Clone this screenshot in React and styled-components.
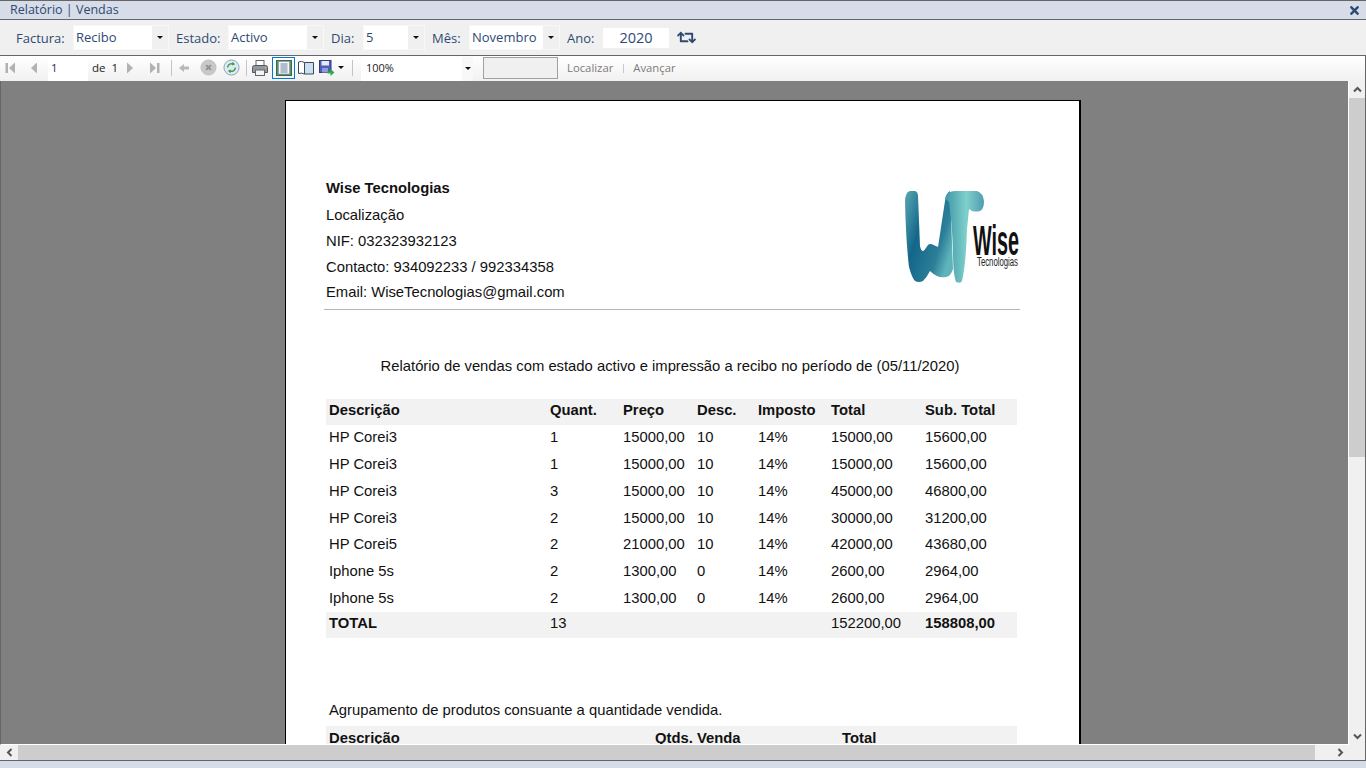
import React from 'react'
import styled, { createGlobalStyle } from 'styled-components'
import { FaRetweet, FaTimes } from 'react-icons/fa'

const Global = createGlobalStyle`
  html, body {
    margin: 0;
    padding: 0;
    overflow: hidden;
    background: #f0f0f0;
  }
`

const Window = styled.div`
  width: 1366px;
  height: 768px;
  display: flex;
  flex-direction: column;
  overflow: hidden;
  background: #f0f0f0;
  font-family: "Open Sans", "Noto Sans", sans-serif;
`

const TitleBar = styled.div`
  height: 18px;
  flex: none;
  display: flex;
  align-items: center;
  justify-content: space-between;
  padding: 0 5px 0 10px;
  background: #d6dce8;
  border-top: 1px solid #666;
  border-bottom: 1px solid #666;
  font-size: 12.5px;
  color: #2f4a72;
`

const TitleText = styled.span`
  margin-bottom: 2px;
`

const CloseIcon = styled(FaTimes)`
  width: 13px;
  height: 13px;
  color: #2d4a73;
`

const FilterBar = styled.div`
  height: 35px;
  flex: none;
  display: flex;
  align-items: center;
  padding-left: 16px;
  background: #f0f0f0;
  border-bottom: 1px solid #666;
`

const FilterLabel = styled.span`
  width: ${p => p.$width}px;
  flex: none;
  margin-left: ${p => p.$gap || 0}px;
  font-size: 13px;
  color: #2f4a72;
`

const Combo = styled.div`
  width: ${p => p.$width}px;
  height: 25px;
  flex: none;
  box-sizing: border-box;
  display: flex;
  background: #fff;
  border: 1px solid #f8f8f8;
  font-size: 13px;
  color: #2f4a72;
`

const ComboText = styled.div`
  flex: 1;
  padding: 2px 0 0 2px;
`

const ComboButton = styled.div`
  width: 16px;
  display: flex;
  align-items: center;
  justify-content: center;
  background: #f0f0f0;
`

const Caret = styled.i`
  width: 0;
  height: 0;
  border-left: 3px solid transparent;
  border-right: 3px solid transparent;
  border-top: 3px solid #111;
`

const YearBox = styled.div`
  width: 66px;
  height: 20px;
  flex: none;
  margin-top: 1px;
  background: #fff;
  font-size: 14.5px;
  line-height: 20px;
  text-align: center;
  color: #2f4a72;
`

const RefreshIcon = styled(FaRetweet)`
  width: 19px;
  height: 19px;
  margin-left: 8px;
  color: #2f4a72;
`

const ViewerBar = styled.div`
  height: 25px;
  flex: none;
  display: flex;
  align-items: center;
  padding-left: 4px;
  background: linear-gradient(#ffffff, #f1f1f1);
  border-right: 1px solid #666;
`

const Slot = styled.div`
  width: ${p => p.$width}px;
  height: 100%;
  flex: none;
  box-sizing: border-box;
  padding-bottom: 2px;
  display: flex;
  align-items: center;
  justify-content: center;
`

const ActiveSlot = styled(Slot)`
  height: 22px;
  margin-bottom: 1px;
  padding-bottom: 0;
  border: 1px solid #0078d7;
`

const Divider = styled.div`
  width: 1px;
  height: 16px;
  flex: none;
  margin: 0 ${p => p.$right || 0}px 1px ${p => p.$left || 0}px;
  background: #c4c4c4;
`

const PageInput = styled.div`
  width: 40px;
  height: 24px;
  flex: none;
  line-height: 22px;
  padding-left: 3px;
  box-sizing: border-box;
  background: #fff;
  font-size: 11.5px;
  color: #3a1a4a;
`

const PageOf = styled.span`
  width: 32px;
  flex: none;
  box-sizing: border-box;
  padding: 0 0 2px 4px;
  font-size: 11.5px;
  color: #222;
  white-space: pre;
`

const ZoomCombo = styled.div`
  width: 112px;
  height: 24px;
  flex: none;
  display: flex;
  align-items: center;
  justify-content: space-between;
  padding-left: 5px;
  box-sizing: border-box;
  background: #fff;
  font-size: 11px;
  line-height: 22px;
  color: #222;
`

const ZoomValue = styled.span`
  margin-bottom: 2px;
`

const ZoomButton = styled.div`
  width: 11px;
  height: 100%;
  display: flex;
  align-items: center;
  justify-content: center;
  background: #f8f8f8;
`

const SearchBox = styled.div`
  width: 75px;
  height: 22px;
  flex: none;
  margin: 0 0 1px 10px;
  box-sizing: border-box;
  background: #f0f0f0;
  border: 1px solid #a0a0a0;
`

const SearchLink = styled.span`
  flex: none;
  font-size: 11.3px;
  color: #807a78;
  margin: 0 0 2px 9px;
`

const LinkDivider = styled.div`
  width: 1px;
  height: 9px;
  flex: none;
  margin: 0 0 1px 10px;
  background: #c8c8c8;
`

const ViewerBody = styled.div`
  height: 679px;
  flex: none;
  display: grid;
  grid-template-columns: minmax(0, 1fr) 16px;
  grid-template-rows: minmax(0, 1fr) 15px;
  border-right: 1px solid #666;
  border-bottom: 1px solid #666;
`

const ReportArea = styled.div`
  min-height: 0;
  background: #808080;
  overflow: hidden;
  padding-top: 19px;
  border-right: 1px solid #fff;
  border-bottom: 1px solid #fff;
  border-left: 1px solid #666;
`

const Page = styled.div`
  width: 753px;
  height: 900px;
  margin-left: 284px;
  background: #fff;
  border: 1px solid #000;
  box-shadow: 1px 0 0 #000;
  padding: 75px 0 0 40px;
  font-family: "Liberation Sans", Arial, sans-serif;
  font-size: 14.8px;
  color: #111;
`

const CompanyHead = styled.div`
  display: flex;
  justify-content: space-between;
  width: 696px;
  height: 134px;
  margin-left: -2px;
  padding-left: 2px;
  box-sizing: border-box;
  border-bottom: 1px solid #b4b4b4;
`

const CompanyLines = styled.div`
  display: flex;
  flex-direction: column;
`

const CompanyName = styled.div`
  height: 26px;
  line-height: 24px;
  font-weight: bold;
`

const CompanyLine = styled.div`
  height: ${p => p.$height || 26}px;
  line-height: ${p => p.$height || 26}px;
`

const Logo = styled.svg`
  width: 115px;
  height: 96px;
  margin-top: 15px;
  overflow: visible;
`

const ReportTitle = styled.div`
  width: 688px;
  margin-top: 47px;
  line-height: 18px;
  text-align: center;
`

const Rows = styled.div`
  width: 691px;
  margin-top: 24px;
`

const Row = styled.div`
  display: grid;
  grid-template-columns: ${p => p.$cols};
  height: ${p => p.$height || 26.75}px;
  align-items: center;
  padding: 0 0 ${p => p.$lift ?? 2}px 3px;
  box-sizing: border-box;
  background: ${p => (p.$shaded ? '#f2f2f2' : 'transparent')};
`

const Cell = styled.div`
  font-weight: ${p => (p.$bold ? 'bold' : 'normal')};
  white-space: nowrap;
`

const GroupCaption = styled.div`
  margin: 63px 0 0 3px;
  line-height: 18px;
`

const GroupRows = styled(Rows)`
  margin-top: 7px;
`

const VScroll = styled.div`
  display: flex;
  flex-direction: column;
  background: #f0f0f0;
`

const ScrollButton = styled.div`
  height: 17px;
  flex: none;
  display: flex;
  align-items: center;
  justify-content: center;
`

const VThumb = styled.div`
  height: 359px;
  flex: none;
  background: #cdcdcd;
`

const VTrack = styled.div`
  flex: 1;
`

const HScroll = styled.div`
  grid-column: 1 / 3;
  display: flex;
  background: #f0f0f0;
`

const HButton = styled.div`
  width: 18px;
  flex: none;
  display: flex;
  align-items: center;
  justify-content: center;
`

const HThumb = styled.div`
  flex: 1;
  background: #cdcdcd;
`

const HEnd = styled(HButton)`
  width: 50px;
`

const BottomBand = styled.div`
  flex: 1;
  background: #d6dce8;
`

function NavArrow({ flip, bar }) {
  return (
    <svg width="14" height="14" viewBox="0 0 14 14" style={flip ? { transform: 'scaleX(-1)' } : undefined}>
      {bar && <rect x="1.5" y="2" width="2.5" height="10" fill="#b2b2b2" />}
      <path d="M11 1.500v11L5 7z" fill="#b2b2b2" />
    </svg>
  )
}

const PrintIcon = () => (
  <svg width="18" height="18" viewBox="0 0 18 18">
    <rect x="5" y="1.500" width="8" height="6" fill="#fff" stroke="#666" />
    <path d="M1.500 8.500q0-2 2-2h11q2 0 2 2v5h-15z" fill="#8e99a6" stroke="#555" />
    <rect x="4.500" y="11" width="9" height="5.500" fill="#f4f4f4" stroke="#666" />
    <rect x="13.500" y="8" width="2" height="1.500" fill="#e8a33a" />
  </svg>
)

const LayoutIcon = () => (
  <svg width="16" height="16" viewBox="0 0 16 16">
    <rect x="0.500" y="0.500" width="15" height="15" fill="#5e8f63" stroke="#3e6a48" />
    <rect x="2.500" y="1.500" width="11" height="12.500" fill="#f4f8fc" stroke="#7a96b4" strokeWidth=".6" />
    <path d="M4.500 4h7M4.500 6h7M4.500 8h7M4.500 10h7M4.500 12h7" stroke="#6a83a0" />
  </svg>
)

const BookIcon = () => (
  <svg width="16" height="15" viewBox="0 0 16 15">
    <path d="M.5 2q3-1.500 6 .5V14q-3-1.500-6-.5z" fill="#fff" stroke="#3a4a5a" />
    <path d="M6.500 2.500h9V14h-9z" fill="#c9dff2" stroke="#3a4a5a" />
  </svg>
)

const SaveIcon = () => (
  <svg width="16" height="18" viewBox="0 0 16 18">
    <rect x="0.500" y="1.500" width="11.500" height="12" fill="#4c5fb5" stroke="#2f3c85" />
    <rect x="2.500" y="2" width="7.500" height="4.500" fill="#e6e9f5" />
    <rect x="3" y="9" width="6" height="4.500" fill="#8f9bd6" />
    <path d="M8.500 12.500h3v-2.500l4 3.500-4 3.500v-2.500h-3z" fill="#2fae48" />
  </svg>
)

const BackIcon = () => (
  <svg width="14" height="14" viewBox="0 0 14 14">
    <path d="M7 3v2.500h5v3H7V11L2 7z" fill="#b8b8b8" />
  </svg>
)

const StopIcon = () => (
  <svg width="17" height="17" viewBox="0 0 18 18">
    <circle cx="9" cy="9" r="8" fill="#c8c8c8" stroke="#c0c0c0" />
    <path d="M6.500 6.500l5 5m0-5l-5 5" stroke="#929292" strokeWidth="2.200" />
  </svg>
)

const ReloadIcon = () => (
  <svg width="17" height="17" viewBox="0 0 18 18">
    <circle cx="9" cy="9" r="8" fill="#dfeaf5" stroke="#7f9fc0" />
    <path d="M5 9a4 4 0 0 1 6-3.500" fill="none" stroke="#3da33d" strokeWidth="1.600" />
    <path d="M13 9a4 4 0 0 1-6 3.500" fill="none" stroke="#3da33d" strokeWidth="1.600" />
    <path d="M10 3l3 2.500-3.500 1.500zM8 15l-3-2.500L8.500 11z" fill="#3da33d" />
  </svg>
)

const Chevron = ({ rotate }) => (
  <svg width="9" height="7" viewBox="0 0 9 7" style={{ transform: `rotate(${rotate}deg)` }}>
    <path d="M1 5.500 4.500 2 8 5.500" fill="none" stroke="#555" strokeWidth="2" />
  </svg>
)

const sales = [
  ['HP Corei3', '1', '15000,00', '10', '14%', '15000,00', '15600,00'],
  ['HP Corei3', '1', '15000,00', '10', '14%', '15000,00', '15600,00'],
  ['HP Corei3', '3', '15000,00', '10', '14%', '45000,00', '46800,00'],
  ['HP Corei3', '2', '15000,00', '10', '14%', '30000,00', '31200,00'],
  ['HP Corei5', '2', '21000,00', '10', '14%', '42000,00', '43680,00'],
  ['Iphone 5s', '2', '1300,00', '0', '14%', '2600,00', '2964,00'],
  ['Iphone 5s', '2', '1300,00', '0', '14%', '2600,00', '2964,00'],
]

const salesCols = '221px 73px 74px 61px 73px 94px 1fr'
const groupCols = '326px 187px 1fr'

export default function App() {
  return (
    <Window>
      <Global />
      <TitleBar>
        <TitleText>Relatório | Vendas</TitleText>
        <CloseIcon />
      </TitleBar>

      <FilterBar>
        <FilterLabel $width={57}>Factura:</FilterLabel>
        <Combo $width={96}>
          <ComboText>Recibo</ComboText>
          <ComboButton><Caret /></ComboButton>
        </Combo>
        <FilterLabel $gap={7} $width={52}>Estado:</FilterLabel>
        <Combo $width={96}>
          <ComboText>Activo</ComboText>
          <ComboButton><Caret /></ComboButton>
        </Combo>
        <FilterLabel $gap={7} $width={32}>Dia:</FilterLabel>
        <Combo $width={62}>
          <ComboText>5</ComboText>
          <ComboButton><Caret /></ComboButton>
        </Combo>
        <FilterLabel $gap={7} $width={37}>Mês:</FilterLabel>
        <Combo $width={91}>
          <ComboText>Novembro</ComboText>
          <ComboButton><Caret /></ComboButton>
        </Combo>
        <FilterLabel $gap={7} $width={36}>Ano:</FilterLabel>
        <YearBox>2020</YearBox>
        <RefreshIcon />
      </FilterBar>

      <ViewerBar>
        <Slot $width={14}><NavArrow bar /></Slot>
        <Slot $width={30}><NavArrow /></Slot>
        <PageInput>1</PageInput>
        <PageOf>de  1</PageOf>
        <Slot $width={22}><NavArrow flip /></Slot>
        <Slot $width={24}><NavArrow flip bar /></Slot>
        <Divider $left={5} />
        <Slot $width={24}><BackIcon /></Slot>
        <Slot $width={24}><StopIcon /></Slot>
        <Slot $width={22}><ReloadIcon /></Slot>
        <Divider $left={4} />
        <Slot $width={25}><PrintIcon /></Slot>
        <ActiveSlot $width={23}><LayoutIcon /></ActiveSlot>
        <Slot $width={22}><BookIcon /></Slot>
        <Slot $width={19}><SaveIcon /></Slot>
        <Slot $width={9}><Caret /></Slot>
        <Divider $left={7} $right={8} />
        <ZoomCombo>
          <ZoomValue>100%</ZoomValue>
          <ZoomButton><Caret /></ZoomButton>
        </ZoomCombo>
        <SearchBox />
        <SearchLink>Localizar</SearchLink>
        <LinkDivider />
        <SearchLink>Avançar</SearchLink>
      </ViewerBar>

      <ViewerBody>
        <ReportArea>
          <Page>
            <CompanyHead>
              <CompanyLines>
                <CompanyName>Wise Tecnologias</CompanyName>
                <CompanyLine>Localização</CompanyLine>
                <CompanyLine>NIF: 032323932123</CompanyLine>
                <CompanyLine>Contacto: 934092233 / 992334358</CompanyLine>
                <CompanyLine $height={25}>Email: WiseTecnologias@gmail.com</CompanyLine>
              </CompanyLines>
              <Logo viewBox="0 0 115 96">
                <defs>
                  <linearGradient id="wLeft" x1="0" y1="0" x2="1" y2="0.6">
                    <stop offset="0" stopColor="#5aa9b4" />
                    <stop offset="0.4" stopColor="#14668a" />
                    <stop offset="0.8" stopColor="#2c7f98" />
                    <stop offset="1" stopColor="#5fb3ba" />
                  </linearGradient>
                  <linearGradient id="tStem" x1="0" y1="0" x2="1" y2="0">
                    <stop offset="0" stopColor="#3f97a8" />
                    <stop offset="0.55" stopColor="#7fd0cb" />
                    <stop offset="1" stopColor="#4f9db0" />
                  </linearGradient>
                </defs>
                <path d="M0 11Q0 1 5 0h5q3 1 3 5l2 50q1 5 3 5c3-1 4-7 7-7 3 0 5 2 8 3L40 10q1-8 5-10l3 78q-2 7-7 8-5 1-9-1-4-2-7-5-3 6-7 10-4 2-8 0-3-3-6-14-3-25-4-65z" fill="url(#wLeft)" />
                <path d="M40 8Q42 0 50 0h22q6 2 7 10 0 8-4 10-4 1-8 0l-3-2-2 20q-1 35-5 52-1 3-6 1-3-8-3-30-1-30-4-50z" fill="url(#tStem)" />
                <text x="68" y="64" fontFamily="'Liberation Sans', sans-serif" fontSize="42" fontWeight="bold" fill="#111" textLength="46" lengthAdjust="spacingAndGlyphs">Wise</text>
                <text x="72" y="75" fontFamily="'Liberation Sans', sans-serif" fontSize="12.500" fill="#222" textLength="41" lengthAdjust="spacingAndGlyphs">Tecnologias</text>
              </Logo>
            </CompanyHead>

            <ReportTitle>Relatório de vendas com estado activo e impressão a recibo no período de (05/11/2020)</ReportTitle>

            <Rows>
              <Row $cols={salesCols} $shaded $height={26} $lift={4}>
                {['Descrição', 'Quant.', 'Preço', 'Desc.', 'Imposto', 'Total', 'Sub. Total'].map(h => (
                  <Cell key={h} $bold>{h}</Cell>
                ))}
              </Row>
              {sales.map((row, i) => (
                <Row key={i} $cols={salesCols}>
                  {row.map((c, j) => <Cell key={j}>{c}</Cell>)}
                </Row>
              ))}
              <Row $cols={salesCols} $shaded $height={26} $lift={4}>
                <Cell $bold>TOTAL</Cell>
                <Cell>13</Cell>
                <Cell />
                <Cell />
                <Cell />
                <Cell>152200,00</Cell>
                <Cell $bold>158808,00</Cell>
              </Row>
            </Rows>

            <GroupCaption>Agrupamento de produtos consuante a quantidade vendida.</GroupCaption>
            <GroupRows>
              <Row $cols={groupCols} $shaded $height={26} $lift={2}>
                <Cell $bold>Descrição</Cell>
                <Cell $bold>Qtds. Venda</Cell>
                <Cell $bold>Total</Cell>
              </Row>
            </GroupRows>
          </Page>
        </ReportArea>
        <VScroll>
          <ScrollButton><Chevron rotate={0} /></ScrollButton>
          <VThumb />
          <VTrack />
          <ScrollButton><Chevron rotate={180} /></ScrollButton>
        </VScroll>
        <HScroll>
          <HButton><Chevron rotate={-90} /></HButton>
          <HThumb />
          <HEnd><Chevron rotate={90} /></HEnd>
        </HScroll>
      </ViewerBody>
      <BottomBand />
    </Window>
  )
}
